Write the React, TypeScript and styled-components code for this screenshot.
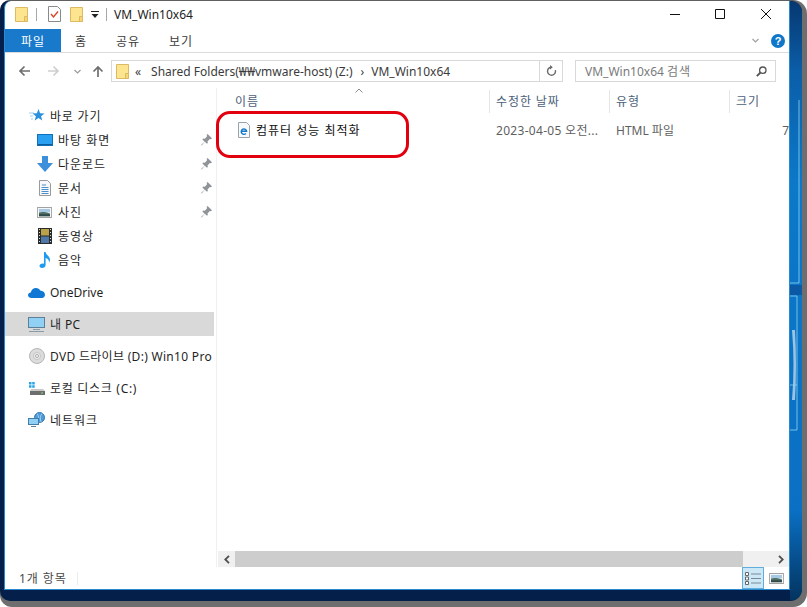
import React, { FC, ReactNode } from 'react';
import styled, { createGlobalStyle } from 'styled-components';

const GlobalStyle = createGlobalStyle`
  html, body {
    margin: 0;
    padding: 0;
    background: #ffffff;
  }
  body {
    font-family: "Noto Sans", "Noto Sans CJK KR", sans-serif;
    font-size: 12px;
    color: #1a1a1a;
  }
`;

const KO_TRACKING = '0.9px';

/* frame */
const Shadow = styled.div`
  width: 807px;
  height: 607px;
  background: #6e6e6e;
  border-radius: 10px 14px 14px 12px;
  overflow: hidden;
`;

const Desktop = styled.div`
  width: 802px;
  height: 601px;
  display: flex;
  padding: 0 0 10px 4px;
  box-sizing: border-box;
  background: #04204a;
  border-radius: 9px 12px 12px 10px;
  border-top: 1px solid #5f5f5f;
  overflow: hidden;
`;

const WallpaperBand = styled.svg`
  flex: none;
  width: 12px;
  height: 600px;
  margin-top: -1px;
`;

const Window = styled.div`
  position: relative;
  flex: none;
  width: 786px;
  height: 589px;
  display: flex;
  flex-direction: column;
  background: #ffffff;
  border-left: 1px solid #2a8ad0;
  border-right: 1px solid #2a8ad0;
  border-bottom: 1px solid #2a8ad0;
  border-radius: 7px 0 0 0;
  box-sizing: border-box;
  overflow: hidden;
`;

/* title bar */
const TitleBar = styled.div`
  flex: none;
  height: 28px;
  box-sizing: border-box;
  display: flex;
  align-items: center;
  padding: 0 0 2px 10px;
`;

const QuickIcon = styled.div<{ $gap?: number }>`
  display: flex;
  margin-right: ${(p) => p.$gap ?? 0}px;
`;

const TitleDivider = styled.span<{ $gap: number }>`
  width: 1px;
  height: 13px;
  background: #a8a8a8;
  margin-right: ${(p) => p.$gap}px;
`;

const TitleText = styled.span`
  font-size: 12px;
  color: #222;
`;

const WindowControls = styled.div`
  margin-left: auto;
  display: flex;
  align-items: center;
  gap: 35px;
  padding-right: 18px;

  svg:last-child {
    margin-left: 1px;
  }
`;

/* ribbon */
const Ribbon = styled.div`
  flex: none;
  height: 23px;
  display: flex;
  align-items: stretch;
  border-bottom: 1px solid #dadbdc;
  padding-right: 4px;
`;

const RibbonTab = styled.div<{ $active?: boolean; $width: number }>`
  width: ${(p) => p.$width}px;
  display: flex;
  align-items: center;
  justify-content: center;
  font-size: 12px;
  letter-spacing: ${KO_TRACKING};
  color: ${(p) => (p.$active ? '#ffffff' : '#3b3b3b')};
  background: ${(p) => (p.$active ? '#1979ca' : 'transparent')};
`;

const RibbonRight = styled.div`
  margin-left: auto;
  display: flex;
  align-items: center;
  gap: 11px;
`;

const HelpBadge = styled.div`
  width: 14px;
  height: 14px;
  border-radius: 50%;
  background: #0f76c9;
  color: #fff;
  font-family: "Liberation Sans", sans-serif;
  font-weight: 700;
  font-size: 11px;
  line-height: 14px;
  text-align: center;
`;

/* address row */
const AddressRow = styled.div`
  flex: none;
  height: 34px;
  display: flex;
  align-items: center;
  padding: 1px 0 0 13px;
`;

const NavIcon = styled.div<{ $width: number }>`
  flex: none;
  width: ${(p) => p.$width}px;
  display: flex;
`;

const AddressBox = styled.div`
  flex: none;
  width: 429px;
  height: 22px;
  margin-left: 6px;
  box-sizing: border-box;
  border: 1px solid #d9d9d9;
  display: flex;
  align-items: center;
  padding-left: 4px;
  font-size: 12px;
  color: #3b3b3b;
  white-space: nowrap;
`;

const Crumb = styled.span<{ $gap: number }>`
  margin-left: ${(p) => p.$gap}px;
`;

const RefreshBox = styled.div`
  flex: none;
  width: 23px;
  height: 22px;
  box-sizing: border-box;
  border: 1px solid #d9d9d9;
  border-left: 0;
  display: flex;
  align-items: center;
  justify-content: center;
`;

const SearchBox = styled.div`
  flex: none;
  width: 201px;
  height: 22px;
  margin-left: 12px;
  box-sizing: border-box;
  border: 1px solid #d9d9d9;
  display: flex;
  align-items: center;
  justify-content: space-between;
  padding: 0 8px 0 9px;
  font-size: 12px;
  color: #7a7a7a;
`;

const KoText = styled.span`
  letter-spacing: ${KO_TRACKING};
`;

/* body */
const Body = styled.div`
  flex: 1;
  min-height: 0;
  display: flex;
`;

const Sidebar = styled.nav`
  flex: none;
  width: 209px;
  padding-top: 16px;
  display: flex;
  flex-direction: column;
  gap: 8px;
  overflow: hidden;
`;

const NavGroup = styled.div`
  display: flex;
  flex-direction: column;
`;

const NavRow = styled.div<{ $indent: number; $selected?: boolean }>`
  height: 24px;
  display: flex;
  align-items: center;
  padding-left: ${(p) => p.$indent}px;
  background: ${(p) => (p.$selected ? '#d9d9d9' : 'transparent')};
  white-space: nowrap;
`;

const NavIconSlot = styled.span`
  flex: none;
  width: 21px;
  display: flex;
  justify-content: center;
  margin-right: 3px;
`;

const NavLabel = styled.span<{ $tracking: number }>`
  font-size: 12px;
  letter-spacing: ${(p) => p.$tracking}px;
  color: #1f1f1f;
  flex: 1;
  overflow: hidden;
`;

const PinSlot = styled.span`
  flex: none;
  display: flex;
  width: 16px;
  justify-content: center;
`;

const Content = styled.div`
  flex: 1;
  min-width: 0;
  display: flex;
  flex-direction: column;
  border-left: 1px solid #f0f0f0;
  margin-left: 2px;
`;

const ListArea = styled.div`
  flex: 1;
  min-height: 0;
  overflow: hidden;
`;

const HeaderRow = styled.div`
  position: relative;
  height: 26px;
  display: flex;
  align-items: center;
`;

const SortCaret = styled.svg`
  position: absolute;
  left: 138px;
  top: 0;
`;

const HeaderCell = styled.div<{ $width: number; $divider?: boolean }>`
  flex: none;
  width: ${(p) => p.$width}px;
  height: 23px;
  box-sizing: border-box;
  display: flex;
  align-items: center;
  padding-left: ${(p) => (p.$divider ? 6 : 18)}px;
  border-left: ${(p) => (p.$divider ? '1px solid #e5e5e5' : '0')};
  color: #4c607a;
  font-size: 12px;
  letter-spacing: ${KO_TRACKING};
`;

const FileRow = styled.div`
  margin-top: 4px;
  height: 24px;
  display: flex;
  align-items: center;
  white-space: nowrap;
`;

const FileName = styled.div`
  flex: none;
  width: 272px;
  display: flex;
  align-items: center;
  gap: 6px;
  padding-left: 21px;
  box-sizing: border-box;
  color: #111;
  letter-spacing: 1px;
`;

const FileCell = styled.div<{ $width: number; $right?: boolean; $tracking?: number }>`
  flex: none;
  width: ${(p) => p.$width}px;
  box-sizing: border-box;
  padding-left: ${(p) => (p.$right ? 0 : 7)}px;
  text-align: ${(p) => (p.$right ? 'right' : 'left')};
  letter-spacing: ${(p) => p.$tracking ?? 0}px;
  color: #5f5f5f;
`;

const Annotation = styled.div`
  position: absolute;
  left: 211px;
  top: 110px;
  width: 193px;
  height: 47px;
  box-sizing: border-box;
  border: 3px solid #e2000f;
  border-radius: 14px;
  pointer-events: none;
`;

/* scrollbar + status */
const ScrollBar = styled.div`
  flex: none;
  height: 16px;
  margin-left: 1px;
  display: flex;
  background: #f0f0f0;
`;

const ScrollButton = styled.div`
  flex: none;
  width: 17px;
  display: flex;
  align-items: center;
  justify-content: center;
`;

const ScrollThumb = styled.div`
  flex: none;
  width: 508px;
  background: #cdcdcd;
`;

const ScrollTrack = styled.div`
  flex: 1;
`;

const StatusBar = styled.div`
  flex: none;
  height: 22px;
  display: flex;
  align-items: center;
  padding-left: 14px;
  color: #4a4a4a;
  font-size: 12px;
`;

const StatusDivider = styled.span`
  width: 1px;
  height: 13px;
  background: #ececec;
  margin-left: 10px;
`;

const ViewButtons = styled.div`
  margin-left: auto;
  display: flex;
  height: 100%;
  align-items: stretch;
  gap: 1px;
  padding-right: 2px;
`;

const ViewButton = styled.div<{ $active?: boolean }>`
  width: 22px;
  box-sizing: border-box;
  display: flex;
  align-items: center;
  justify-content: center;
  background: ${(p) => (p.$active ? '#cce8f7' : 'transparent')};
  border: 1px solid ${(p) => (p.$active ? '#62aedb' : 'transparent')};
`;

/* icons */
const FolderIcon: FC = () => (
  <svg width="13" height="15" viewBox="0 0 13 15">
    <path d="M.5.5h12v14H.5z" fill="#fde58f" stroke="#dcb963" />
    <path d="M9.5 9.5h3v5h-3z" fill="#f7d674" stroke="#dcb963" />
  </svg>
);

const ChecklistIcon = () => (
  <svg width="13" height="16" viewBox="0 0 13 16">
    <path d="M.5.5h9l3 3v12H.5z" fill="#fff" stroke="#8a8a8a" />
    <path d="M3 8l2.5 3L10 5.500" fill="none" stroke="#d9472b" strokeWidth="1.400" />
  </svg>
);

const DropIcon = () => (
  <svg width="8" height="7" viewBox="0 0 8 7">
    <path d="M0 0h8v1H0z" fill="#222" />
    <path d="M.5 3h7L4 7z" fill="#222" />
  </svg>
);

const Minimize = () => (
  <svg width="10" height="10" viewBox="0 0 10 10">
    <path d="M0 5.500h10" stroke="#111" />
  </svg>
);
const Maximize = () => (
  <svg width="10" height="10" viewBox="0 0 10 10">
    <path d="M.5.500h9v9h-9z" fill="none" stroke="#111" />
  </svg>
);
const CloseIcon = () => (
  <svg width="10" height="10" viewBox="0 0 10 10">
    <path d="M0 0l10 10M10 0L0 10" stroke="#111" />
  </svg>
);

const Arrow: FC<{ color: string; dir: 'left' | 'right' | 'up' }> = ({ color, dir }) => {
  const d = {
    left: 'M12 6H2M6.500 1.500L2 6l4.500 4.500',
    right: 'M0 6h10M5.500 1.500L10 6l-4.500 4.500',
    up: 'M6 12V2M1.500 6.500L6 2l4.500 4.500',
  }[dir];
  return (
    <svg width="12" height="12" viewBox="0 0 12 12">
      <path d={d} fill="none" stroke={color} strokeWidth="1.700" />
    </svg>
  );
};

const Chevron: FC<{ color: string; width?: number }> = ({ color, width = 7 }) => (
  <svg width={width} height="5" viewBox="0 0 7 5">
    <path d="M.5 1l3 3 3-3" fill="none" stroke={color} strokeWidth="1.200" />
  </svg>
);

const RefreshIcon = () => (
  <svg width="11" height="12" viewBox="0 0 11 12">
    <path d="M5 2.200a4 4 0 1 0 4.400 3" fill="none" stroke="#6a6a6a" strokeWidth="1.400" />
    <path d="M4 0v4.600L6.800 2.300z" fill="#6a6a6a" />
  </svg>
);

const SearchIcon = () => (
  <svg width="11" height="11" viewBox="0 0 11 11">
    <circle cx="6.800" cy="4.200" r="3.200" fill="none" stroke="#555" strokeWidth="1.300" />
    <path d="M4.500 6.500L.8 10.200" stroke="#555" strokeWidth="1.800" />
  </svg>
);

const StarIcon = () => (
  <svg width="16" height="14" viewBox="0 0 16 14">
    <path d="M0 4h5M1 7h3M2 10h2" stroke="#9fd0f3" strokeWidth="1" />
    <path d="M9.500 0l1.600 4.200 4.400.2-3.400 2.800 1.200 4.300L9.500 9l-3.800 2.500 1.200-4.300-3.400-2.800 4.400-.2z" fill="#2a8fdc" />
  </svg>
);

const DesktopIcon = () => (
  <svg width="16" height="12" viewBox="0 0 16 12">
    <rect x=".5" y=".5" width="15" height="11" fill="#29a0f0" stroke="#1070b8" />
    <path d="M1 10h14v1H1z" fill="#0c5c9c" />
  </svg>
);

const DownloadIcon = () => (
  <svg width="16" height="16" viewBox="0 0 16 16">
    <path d="M5 0h6v7h5l-8 9-8-9h5z" fill="#3b8fdb" />
  </svg>
);

const DocIcon = () => (
  <svg width="12" height="16" viewBox="0 0 12 16">
    <path d="M.5.500h8l3 3v12H.5z" fill="#f6f8fb" stroke="#9a9a9a" />
    <path d="M3 5h4M2.500 7.500h7M2.500 9.500h7M2.500 11.500h7M2.500 13.500h7" stroke="#4d8fc9" />
  </svg>
);

const PictureIcon: FC = () => (
  <svg width="15" height="11" viewBox="0 0 16 12">
    <rect x=".5" y=".5" width="15" height="11" fill="#fff" stroke="#9a9a9a" />
    <rect x="2" y="2" width="12" height="4" fill="#a7c9e3" />
    <path d="M2 6c3-1 6-1 12 1v3H2z" fill="#4f6f63" />
    <path d="M2 8h12v2H2z" fill="#2f4a4a" />
  </svg>
);

const VideoIcon = () => (
  <svg width="14" height="16" viewBox="0 0 14 16">
    <rect width="14" height="16" fill="#2b2b2b" />
    <rect x="3" y="1" width="8" height="6.500" fill="#b9a24a" />
    <rect x="3" y="8.500" width="8" height="6.500" fill="#4d78a8" />
    <path d="M1 1.500h1M1 4.500h1M1 7.500h1M1 10.500h1M1 13.500h1M12 1.500h1M12 4.500h1M12 7.500h1M12 10.500h1M12 13.500h1" stroke="#ddd" />
  </svg>
);

const MusicIcon = () => (
  <svg width="12" height="16" viewBox="0 0 12 16">
    <path d="M5 0h1.600c.3 3 4.400 4 4.400 8 0 1-.3 1.800-.8 2.500.2-2.600-1.600-4-3.600-4.600V13c0 1.900-1.600 3-3.500 3C1.700 16 .5 15.200.5 14c0-1.700 2-2.800 4.500-2.300z" fill="#1e9bf0" />
  </svg>
);

const PinIcon = () => (
  <svg width="11" height="12" viewBox="0 0 10 11">
    <path d="M6 0l4 4-1 .8-.8-.3L6 6.700l.2 1.500-.8.800L3.400 7 .6 10.500 0 10l3.300-3L1.200 5l.8-.8 1.500.2L5.500 2l-.3-1z" fill="#8f9499" />
  </svg>
);

const CloudIcon = () => (
  <svg width="17" height="11" viewBox="0 0 17 11">
    <path d="M3.500 11C1.500 11 0 9.800 0 8.200 0 6.700 1.200 5.600 2.800 5.500 3.200 2.800 5.300 1 8 1c1.900 0 3.500 1 4.300 2.600C14.800 3.800 17 5.500 17 7.800c0 1.900-1.300 3.200-3 3.200z" fill="#0f78d4" />
  </svg>
);

const MonitorIcon = () => (
  <svg width="17" height="15" viewBox="0 0 17 15">
    <rect x=".5" y=".5" width="16" height="10" fill="#8fd0f4" stroke="#5f7f96" />
    <path d="M5 12h7v1H5zM1 14h15v1H1z" fill="#8a9aa6" />
  </svg>
);

const DiscIcon = () => (
  <svg width="16" height="16" viewBox="0 0 16 16">
    <circle cx="8" cy="8" r="7.500" fill="#dcdcdc" stroke="#b4b4b4" />
    <circle cx="8" cy="8" r="3.500" fill="#f0f0f0" stroke="#c4c4c4" />
    <circle cx="8" cy="8" r="1.500" fill="#fff" stroke="#a8a8a8" />
  </svg>
);

const DriveIcon = () => (
  <svg width="16" height="13" viewBox="0 0 16 13">
    <path d="M0 0h2.500v2.500H0zM3.200 0h2.500v2.500H3.200zM0 3.200h2.500v2.500H0zM3.200 3.200h2.500v2.500H3.200z" fill="#27a5e8" />
    <path d="M2 7h12l2 2v4H1V9z" fill="#c9c9c9" />
    <rect x="1" y="9" width="15" height="4" fill="#6d6d6d" />
    <rect x="12" y="10.500" width="2" height="1" fill="#7fe07f" />
  </svg>
);

const NetworkIcon = () => (
  <svg width="17" height="16" viewBox="0 0 17 16">
    <circle cx="11.500" cy="5.500" r="5" fill="#4f9ad8" stroke="#2f76b3" />
    <path d="M9 1.500c2 2 2 6 1 8.500M14 1.500c-2 2-2 6-1 8.500" stroke="#9fd0f3" fill="none" />
    <rect x=".5" y="6.500" width="10" height="6" fill="#8fd0f4" stroke="#3f7fa8" />
    <path d="M3 14h5v1H3z" fill="#5f7f96" />
  </svg>
);

const HtmlIcon = () => (
  <svg width="12" height="16" viewBox="0 0 12 16">
    <path d="M.5.500h8l3 3v12H.5z" fill="#f7f9fb" stroke="#9aa3ad" />
    <path d="M3.400 9.300h5.200a2.700 2.700 0 1 0-.7 2.200" fill="none" stroke="#1277c9" strokeWidth="1.400" />
  </svg>
);

const DetailsIcon = () => (
  <svg width="16" height="13" viewBox="0 0 16 13">
    <path d="M.5.500h3v3h-3zM.5 5h3v3h-3zM.5 9.500h3v3h-3z" fill="#fff" stroke="#666" />
    <path d="M6 2h10M6 6.500h10M6 11h10" stroke="#7b8a96" />
  </svg>
);

const ScrollChevron: FC<{ dir: 'left' | 'right' }> = ({ dir }) => (
  <svg width="6" height="9" viewBox="0 0 6 9">
    <path d={dir === 'left' ? 'M5 .8L1.300 4.500 5 8.200' : 'M1 .8l3.700 3.700L1 8.200'} fill="none" stroke="#505050" strokeWidth="1.800" />
  </svg>
);

/* data */
interface NavItem {
  label: string;
  icon: ReactNode;
  indent: number;
  tracking: number;
  pinned?: boolean;
  selected?: boolean;
}

const quickAccess: NavItem[] = [
  { label: '바로 가기', icon: <StarIcon />, indent: 21, tracking: 0.8 },
  { label: '바탕 화면', icon: <DesktopIcon />, indent: 29, tracking: 1, pinned: true },
  { label: '다운로드', icon: <DownloadIcon />, indent: 29, tracking: 1, pinned: true },
  { label: '문서', icon: <DocIcon />, indent: 29, tracking: 1, pinned: true },
  { label: '사진', icon: <PictureIcon />, indent: 29, tracking: 1, pinned: true },
  { label: '동영상', icon: <VideoIcon />, indent: 29, tracking: 1 },
  { label: '음악', icon: <MusicIcon />, indent: 29, tracking: 1 },
];

const groups: NavItem[][] = [
  quickAccess,
  [{ label: 'OneDrive', icon: <CloudIcon />, indent: 21, tracking: 0 }],
  [{ label: '내 PC', icon: <MonitorIcon />, indent: 21, tracking: 0.4, selected: true }],
  [{ label: 'DVD 드라이브 (D:) Win10 Pro', icon: <DiscIcon />, indent: 21, tracking: 0.3 }],
  [{ label: '로컬 디스크 (C:)', icon: <DriveIcon />, indent: 21, tracking: 0.7 }],
  [{ label: '네트워크', icon: <NetworkIcon />, indent: 21, tracking: 1 }],
];

const App: FC = () => (
  <>
    <GlobalStyle />
    <Shadow>
      <Desktop>
        <Window>
          <TitleBar>
            <QuickIcon $gap={8}>
              <FolderIcon />
            </QuickIcon>
            <TitleDivider $gap={11} />
            <QuickIcon $gap={9}>
              <ChecklistIcon />
            </QuickIcon>
            <QuickIcon $gap={8}>
              <FolderIcon />
            </QuickIcon>
            <QuickIcon $gap={7}>
              <DropIcon />
            </QuickIcon>
            <TitleDivider $gap={7} />
            <TitleText>VM_Win10x64</TitleText>
            <WindowControls>
              <Minimize />
              <Maximize />
              <CloseIcon />
            </WindowControls>
          </TitleBar>
          <Ribbon>
            <RibbonTab $active $width={56}>파일</RibbonTab>
            <RibbonTab $width={40}>홈</RibbonTab>
            <RibbonTab $width={54}>공유</RibbonTab>
            <RibbonTab $width={52}>보기</RibbonTab>
            <RibbonRight>
              <Chevron color="#a0a0a0" width={9} />
              <HelpBadge>?</HelpBadge>
            </RibbonRight>
          </Ribbon>
          <AddressRow>
            <NavIcon $width={30}><Arrow color="#6e6e6e" dir="left" /></NavIcon>
            <NavIcon $width={26}><Arrow color="#cfcfcf" dir="right" /></NavIcon>
            <NavIcon $width={18}><Chevron color="#9a9a9a" /></NavIcon>
            <NavIcon $width={13}><Arrow color="#6e6e6e" dir="up" /></NavIcon>
            <AddressBox>
              <FolderIcon />
              <Crumb $gap={6}>«</Crumb>
              <Crumb $gap={10}>Shared Folders(₩₩vmware-host) (Z:)</Crumb>
              <Crumb $gap={8}>›</Crumb>
              <Crumb $gap={7}>VM_Win10x64</Crumb>
            </AddressBox>
            <RefreshBox><RefreshIcon /></RefreshBox>
            <SearchBox>
              <span>VM_Win10x64 <KoText>검색</KoText></span>
              <SearchIcon />
            </SearchBox>
          </AddressRow>
          <Body>
            <Sidebar>
              {groups.map((group) => (
                <NavGroup key={group[0].label}>
                  {group.map((item) => (
                    <NavRow key={item.label} $indent={item.indent} $selected={item.selected}>
                      <NavIconSlot>{item.icon}</NavIconSlot>
                      <NavLabel $tracking={item.tracking}>{item.label}</NavLabel>
                      {item.pinned && <PinSlot><PinIcon /></PinSlot>}
                    </NavRow>
                  ))}
                </NavGroup>
              ))}
            </Sidebar>
            <Content>
              <ListArea>
                <HeaderRow>
                  <SortCaret width="8" height="5" viewBox="0 0 8 5">
                    <path d="M.5 4.500L4 1l3.500 3.500" fill="none" stroke="#8a8a8a" />
                  </SortCaret>
                  <HeaderCell $width={272}>이름</HeaderCell>
                  <HeaderCell $width={120} $divider>수정한 날짜</HeaderCell>
                  <HeaderCell $width={120} $divider>유형</HeaderCell>
                  <HeaderCell $width={60} $divider>크기</HeaderCell>
                </HeaderRow>
                <FileRow>
                  <FileName>
                    <HtmlIcon />
                    컴퓨터 성능 최적화
                  </FileName>
                  <FileCell $width={120} $tracking={0.3}>2023-04-05 오전...</FileCell>
                  <FileCell $width={120}>HTML 파일</FileCell>
                  <FileCell $width={60} $right>7</FileCell>
                </FileRow>
              </ListArea>
              <ScrollBar>
                <ScrollButton><ScrollChevron dir="left" /></ScrollButton>
                <ScrollThumb />
                <ScrollTrack />
                <ScrollButton><ScrollChevron dir="right" /></ScrollButton>
              </ScrollBar>
            </Content>
          </Body>
          <StatusBar>
            <KoText>1개 항목</KoText>
            <StatusDivider />
            <ViewButtons>
              <ViewButton $active><DetailsIcon /></ViewButton>
              <ViewButton><PictureIcon /></ViewButton>
            </ViewButtons>
          </StatusBar>
          <Annotation />
        </Window>
        <WallpaperBand viewBox="0 0 12 600" preserveAspectRatio="none">
          <defs>
            <linearGradient id="band" x1="0" y1="0" x2="0" y2="1">
              <stop offset="0" stopColor="#06376f" />
              <stop offset="0.12" stopColor="#0b5ea8" />
              <stop offset="0.3" stopColor="#0b78c8" />
              <stop offset="0.85" stopColor="#0a70c4" />
              <stop offset="1" stopColor="#033460" />
            </linearGradient>
          </defs>
          <rect width="12" height="600" fill="url(#band)" />
          <path d="M9 100V283H0" fill="none" stroke="#8fd2ee" strokeOpacity="0.8" />
          <rect x="0" y="285" width="12" height="10" fill="#0b58a4" />
          <path d="M0 296h7V430H0" fill="none" stroke="#8fd2ee" strokeOpacity="0.8" />
          <path d="M2 330q3 35 0 70h3q2-35 0-70z" fill="#d6e6ee" fillOpacity="0.7" />
          <path d="M0 385h7" stroke="#8fd2ee" strokeOpacity="0.8" />
        </WallpaperBand>
      </Desktop>
    </Shadow>
  </>
);

export default App;
